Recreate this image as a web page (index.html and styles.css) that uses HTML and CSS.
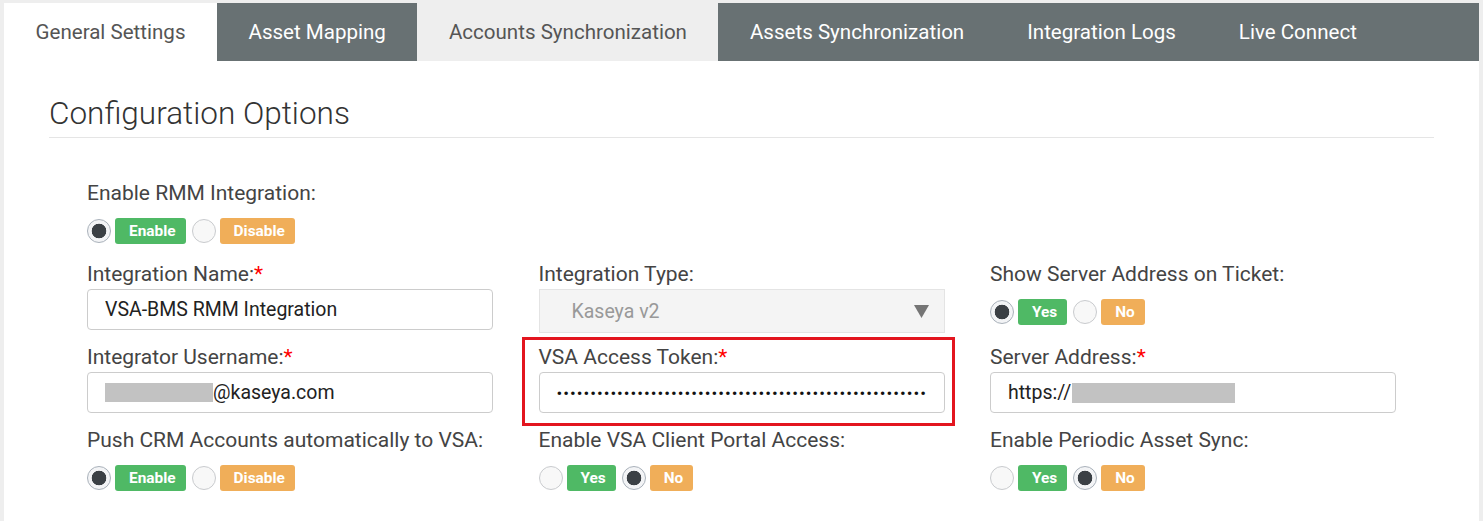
FILE: index.html
```html
<!DOCTYPE html>
<html lang="en">
<head>
<meta charset="utf-8">
<title>Configuration Options</title>
<link rel="stylesheet" href="styles.css">
</head>
<body>
<div class="page">
  <nav class="tabs">
    <a class="tab tab-active">General Settings</a>
    <a class="tab tab-dark">Asset Mapping</a>
    <a class="tab tab-hover">Accounts Synchronization</a>
    <a class="tab tab-dark">Assets Synchronization</a>
    <a class="tab tab-dark">Integration Logs</a>
    <a class="tab tab-dark">Live Connect</a>
  </nav>

  <section class="content">
    <h1 class="title">Configuration Options</h1>

    <form class="form">
      <div class="field field-choice field-lead">
        <label class="label">Enable RMM Integration:</label>
        <div class="choice">
          <input class="radio" type="radio" name="rmm" checked><span class="badge badge-yes">Enable</span>
          <input class="radio" type="radio" name="rmm"><span class="badge badge-no">Disable</span>
        </div>
      </div>

      <div class="grid">
        <div class="field">
          <label class="label">Integration Name:<span class="req">*</span></label>
          <input class="input" type="text" value="VSA-BMS RMM Integration">
        </div>
        <div class="field">
          <label class="label">Integration Type:</label>
          <div class="select">
            <span>Kaseya v2</span>
            <svg class="caret" width="15" height="13" viewBox="0 0 15 13"><path d="M0 0 H15 L7.5 13 Z" fill="#757575"/></svg>
          </div>
        </div>
        <div class="field field-choice">
          <label class="label">Show Server Address on Ticket:</label>
          <div class="choice">
            <input class="radio" type="radio" name="ssa" checked><span class="badge badge-yes">Yes</span>
            <input class="radio" type="radio" name="ssa"><span class="badge badge-no">No</span>
          </div>
        </div>

        <div class="field">
          <label class="label">Integrator Username:<span class="req">*</span></label>
          <div class="input input-static"><span class="redact redact-user"></span>@kaseya.com</div>
        </div>
        <div class="field field-highlight">
          <label class="label">VSA Access Token:<span class="req">*</span></label>
          <input class="input input-token" type="password" value="aaaaaaaaaaaaaaaaaaaaaaaaaaaaaaaaaaaaaaaaaaaaaaaaaaaaaaaaaaaaaaaaaaaaaaaaaaaaaaaaaaaaaaaaaa">
        </div>
        <div class="field">
          <label class="label">Server Address:<span class="req">*</span></label>
          <div class="input input-static">https://<span class="redact redact-server"></span></div>
        </div>

        <div class="field field-choice">
          <label class="label">Push CRM Accounts automatically to VSA:</label>
          <div class="choice">
            <input class="radio" type="radio" name="push" checked><span class="badge badge-yes">Enable</span>
            <input class="radio" type="radio" name="push"><span class="badge badge-no">Disable</span>
          </div>
        </div>
        <div class="field field-choice">
          <label class="label">Enable VSA Client Portal Access:</label>
          <div class="choice">
            <input class="radio" type="radio" name="portal"><span class="badge badge-yes">Yes</span>
            <input class="radio" type="radio" name="portal" checked><span class="badge badge-no">No</span>
          </div>
        </div>
        <div class="field field-choice">
          <label class="label">Enable Periodic Asset Sync:</label>
          <div class="choice">
            <input class="radio" type="radio" name="sync"><span class="badge badge-yes">Yes</span>
            <input class="radio" type="radio" name="sync" checked><span class="badge badge-no">No</span>
          </div>
        </div>
      </div>
    </form>
  </section>
</div>
</body>
</html>
```

FILE: styles.css
```css
* {
  box-sizing: border-box;
}

html, body {
  margin: 0;
  padding: 0;
}

body {
  background: #eeeeee;
  font-family: Roboto, "Liberation Sans", sans-serif;
  color: #444;
  overflow: hidden;
}

.page {
  margin: 3px 4px 0;
  background: #ffffff;
  min-height: 518px;
}

/* Tabs */
.tabs {
  display: flex;
  background: #687173;
  height: 58px;
}

.tab {
  display: block;
  padding: 0 31.5px;
  line-height: 59px;
  font-size: 20.55px;
  font-weight: 400;
  white-space: nowrap;
  text-decoration: none;
  cursor: pointer;
}

.tab-dark {
  color: #ffffff;
}

.tab-active {
  background: #ffffff;
  color: #555;
}

.tab-hover {
  background: #eeeeee;
  color: #555;
}

/* Content */
.content {
  padding: 35px 45px 0;
}

.title {
  margin: 0;
  font-size: 31.5px;
  font-weight: 300;
  line-height: 35px;
  color: #333;
  padding-bottom: 6px;
  border-bottom: 1px solid #e5e5e5;
}

.form {
  margin: 43px 0 0 38px;
}

.field {
  display: flex;
  flex-direction: column;
}

.field-lead {
  margin-bottom: 18px;
}

.label {
  display: block;
  font-size: 21px;
  line-height: 24px;
  color: #444;
  margin-bottom: 3px;
  white-space: nowrap;
}

.field-choice .label {
  margin-bottom: 13px;
}

.req {
  color: #ff0000;
}

.grid {
  display: grid;
  grid-template-columns: repeat(3, 406px);
  grid-template-rows: 68px 68px auto;
  column-gap: 45.5px;
  row-gap: 15px;
  align-items: start;
}

/* Inputs */
.input {
  display: block;
  width: 100%;
  height: 41px;
  margin: 0;
  padding: 0 17px;
  border: 1px solid #cccccc;
  border-radius: 4px;
  background: #ffffff;
  font-family: Roboto, "Liberation Sans", sans-serif;
  font-size: 19.5px;
  color: #222;
  outline: none;
}

.input-static {
  display: flex;
  align-items: center;
  white-space: nowrap;
}

.input-token {
  font-size: 17px;
  letter-spacing: 1px;
  color: #111;
}

.redact {
  display: inline-block;
  background: #c2c2c2;
}

.redact-user {
  width: 108px;
  height: 19px;
  margin-top: -1px;
}

.redact-server {
  width: 163px;
  height: 20px;
  margin-left: 1px;
}

.select {
  display: flex;
  align-items: center;
  justify-content: space-between;
  height: 44px;
  padding: 0 15px 0 32px;
  border: 1px solid #e4e4e4;
  background: #f4f4f4;
  font-size: 19.5px;
  color: #999;
}

.caret {
  display: block;
}

/* Highlight annotation */
.field-highlight {
  position: relative;
}

.field-highlight::after {
  content: "";
  position: absolute;
  top: -8px;
  left: -16.5px;
  right: -10.5px;
  bottom: -13px;
  border: 3px solid #e3151f;
  pointer-events: none;
}

/* Radio + badge */
.choice {
  display: flex;
  align-items: center;
  height: 26px;
}

.radio {
  appearance: none;
  -webkit-appearance: none;
  width: 24px;
  height: 24px;
  margin: 0;
  border: 1px solid #c9cbce;
  border-radius: 50%;
  background: #f8f8f8;
  flex: none;
}

.radio:checked {
  border-color: #a9b1ba;
  background: radial-gradient(circle, #3b4045 0 7px, #f3f4f6 7.6px);
}

.badge {
  display: inline-flex;
  align-items: center;
  height: 26px;
  margin: 0 6px 0 4px;
  padding: 0 10px 0 14px;
  border-radius: 3px;
  font-size: 15.4px;
  font-weight: 700;
  color: #ffffff;
}

.badge-yes {
  background: #4fb965;
}

.badge-no {
  background: #f0ae59;
}
```
